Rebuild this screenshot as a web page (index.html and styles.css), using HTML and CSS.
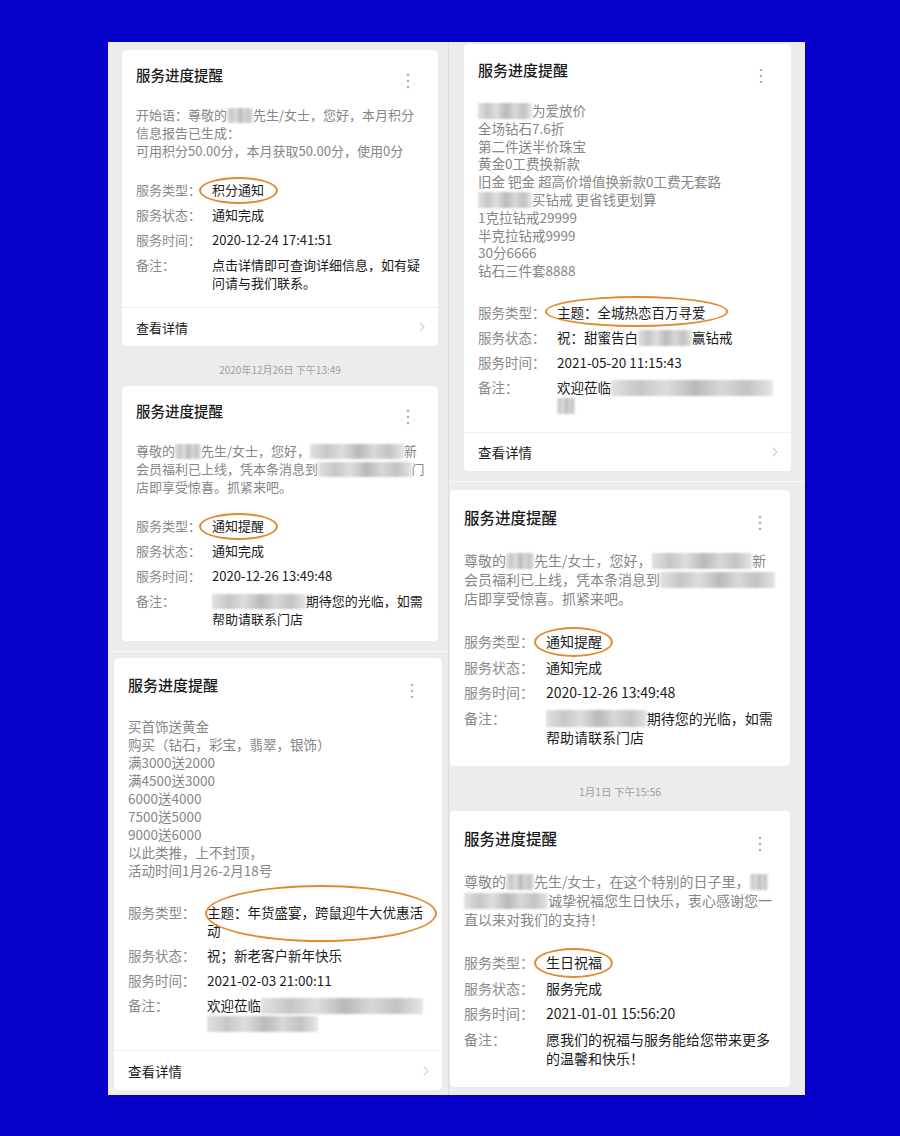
FILE: index.html
```html
<!DOCTYPE html>
<html lang="zh-CN">
<head>
    <meta charset="UTF-8">
    <meta name="viewport" content="width=device-width, initial-scale=1.0">
    <title>服务进度提醒</title>
    <link rel="stylesheet" href="styles.css">
</head>
<body>
    <div class="board">
        <div class="col col-left">
            <section class="shot shot-a">
                <div class="card">
                    <div class="card-head">
                        <h3>服务进度提醒</h3>
                        <svg class="dots" viewBox="0 0 4 16" width="4" height="16"><circle cx="2" cy="2" r="1.3"/><circle cx="2" cy="8" r="1.3"/><circle cx="2" cy="14" r="1.3"/></svg>
                    </div>
                    <p class="msg">开始语：尊敬的<span class="blur blur-2"></span>先生/女士，您好，本月积分<br>信息报告已生成：<br>可用积分50.00分，本月获取50.00分，使用0分</p>
                    <div class="fields">
                        <div class="row"><span class="label">服务类型：</span><div class="value"><span class="mark">积分通知</span></div></div>
                        <div class="row"><span class="label">服务状态：</span><div class="value">通知完成</div></div>
                        <div class="row"><span class="label">服务时间：</span><div class="value">2020-12-24 17:41:51</div></div>
                        <div class="row"><span class="label">备注：</span><div class="value">点击详情即可查询详细信息，如有疑<br>问请与我们联系。</div></div>
                    </div>
                    <div class="card-foot">
                        <span>查看详情</span>
                        <svg class="chev" viewBox="0 0 6 10" width="6" height="10"><polyline points="1,1 5,5 1,9"/></svg>
                    </div>
                </div>

                <div class="stamp">2020年12月26日 下午13:49</div>

                <div class="card card-plain">
                    <div class="card-head">
                        <h3>服务进度提醒</h3>
                        <svg class="dots" viewBox="0 0 4 16" width="4" height="16"><circle cx="2" cy="2" r="1.3"/><circle cx="2" cy="8" r="1.3"/><circle cx="2" cy="14" r="1.3"/></svg>
                    </div>
                    <p class="msg">尊敬的<span class="blur blur-2"></span>先生/女士，您好，<span class="blur blur-7"></span>新<br>会员福利已上线，凭本条消息到<span class="blur blur-7"></span>门<br>店即享受惊喜。抓紧来吧。</p>
                    <div class="fields">
                        <div class="row"><span class="label">服务类型：</span><div class="value"><span class="mark">通知提醒</span></div></div>
                        <div class="row"><span class="label">服务状态：</span><div class="value">通知完成</div></div>
                        <div class="row"><span class="label">服务时间：</span><div class="value">2020-12-26 13:49:48</div></div>
                        <div class="row"><span class="label">备注：</span><div class="value"><span class="blur blur-7"></span>期待您的光临，如需<br>帮助请联系门店</div></div>
                    </div>
                </div>
            </section>

            <section class="shot shot-b">
                <div class="card">
                    <div class="card-head">
                        <h3>服务进度提醒</h3>
                        <svg class="dots" viewBox="0 0 4 16" width="4" height="16"><circle cx="2" cy="2" r="1.3"/><circle cx="2" cy="8" r="1.3"/><circle cx="2" cy="14" r="1.3"/></svg>
                    </div>
                    <p class="msg">买首饰送黄金<br>购买（钻石，彩宝，翡翠，银饰）<br>满3000送2000<br>满4500送3000<br>6000送4000<br>7500送5000<br>9000送6000<br>以此类推，上不封顶，<br>活动时间1月26-2月18号</p>
                    <div class="fields">
                        <div class="row"><span class="label">服务类型：</span><div class="value mark mark-tall">主题：年货盛宴，跨鼠迎牛大优惠活<br>动</div></div>
                        <div class="row"><span class="label">服务状态：</span><div class="value">祝；新老客户新年快乐</div></div>
                        <div class="row"><span class="label">服务时间：</span><div class="value">2021-02-03 21:00:11</div></div>
                        <div class="row"><span class="label">备注：</span><div class="value">欢迎莅临<span class="blur blur-12"></span><br><span class="blur blur-8"></span></div></div>
                    </div>
                    <div class="card-foot">
                        <span>查看详情</span>
                        <svg class="chev" viewBox="0 0 6 10" width="6" height="10"><polyline points="1,1 5,5 1,9"/></svg>
                    </div>
                </div>
            </section>
        </div>

        <div class="col col-right">
            <section class="shot shot-c">
                <div class="card">
                    <div class="card-head">
                        <h3>服务进度提醒</h3>
                        <svg class="dots" viewBox="0 0 4 16" width="4" height="16"><circle cx="2" cy="2" r="1.3"/><circle cx="2" cy="8" r="1.3"/><circle cx="2" cy="14" r="1.3"/></svg>
                    </div>
                    <p class="msg"><span class="blur blur-4"></span>为爱放价<br>全场钻石7.6折<br>第二件送半价珠宝<br>黄金0工费换新款<br>旧金 钯金 超高价增值换新款0工费无套路<br><span class="blur blur-4"></span>买钻戒 更省钱更划算<br>1克拉钻戒29999<br>半克拉钻戒9999<br>30分6666<br>钻石三件套8888</p>
                    <div class="fields">
                        <div class="row"><span class="label">服务类型：</span><div class="value"><span class="mark mark-wide">主题：全城热恋百万寻爱</span></div></div>
                        <div class="row"><span class="label">服务状态：</span><div class="value">祝：甜蜜告白<span class="blur blur-4"></span>赢钻戒</div></div>
                        <div class="row"><span class="label">服务时间：</span><div class="value">2021-05-20 11:15:43</div></div>
                        <div class="row"><span class="label">备注：</span><div class="value">欢迎莅临<span class="blur blur-12"></span><br><span class="blur blur-1"></span></div></div>
                    </div>
                    <div class="card-foot">
                        <span>查看详情</span>
                        <svg class="chev" viewBox="0 0 6 10" width="6" height="10"><polyline points="1,1 5,5 1,9"/></svg>
                    </div>
                </div>
            </section>

            <section class="shot shot-d">
                <div class="card card-plain">
                    <div class="card-head">
                        <h3>服务进度提醒</h3>
                        <svg class="dots" viewBox="0 0 4 16" width="4" height="16"><circle cx="2" cy="2" r="1.3"/><circle cx="2" cy="8" r="1.3"/><circle cx="2" cy="14" r="1.3"/></svg>
                    </div>
                    <p class="msg">尊敬的<span class="blur blur-2"></span>先生/女士，您好，<span class="blur blur-7"></span>新<br>会员福利已上线，凭本条消息到<span class="blur blur-8"></span><br>店即享受惊喜。抓紧来吧。</p>
                    <div class="fields">
                        <div class="row"><span class="label">服务类型：</span><div class="value"><span class="mark">通知提醒</span></div></div>
                        <div class="row"><span class="label">服务状态：</span><div class="value">通知完成</div></div>
                        <div class="row"><span class="label">服务时间：</span><div class="value">2020-12-26 13:49:48</div></div>
                        <div class="row"><span class="label">备注：</span><div class="value"><span class="blur blur-7"></span>期待您的光临，如需<br>帮助请联系门店</div></div>
                    </div>
                </div>

                <div class="stamp">1月1日 下午15:56</div>

                <div class="card card-plain">
                    <div class="card-head">
                        <h3>服务进度提醒</h3>
                        <svg class="dots" viewBox="0 0 4 16" width="4" height="16"><circle cx="2" cy="2" r="1.3"/><circle cx="2" cy="8" r="1.3"/><circle cx="2" cy="14" r="1.3"/></svg>
                    </div>
                    <p class="msg">尊敬的<span class="blur blur-2"></span>先生/女士，在这个特别的日子里，<span class="blur blur-1"></span><br><span class="blur blur-6"></span>诚挚祝福您生日快乐，衷心感谢您一<br>直以来对我们的支持！</p>
                    <div class="fields">
                        <div class="row"><span class="label">服务类型：</span><div class="value"><span class="mark">生日祝福</span></div></div>
                        <div class="row"><span class="label">服务状态：</span><div class="value">服务完成</div></div>
                        <div class="row"><span class="label">服务时间：</span><div class="value">2021-01-01 15:56:20</div></div>
                        <div class="row"><span class="label">备注：</span><div class="value">愿我们的祝福与服务能给您带来更多<br>的温馨和快乐！</div></div>
                    </div>
                </div>
            </section>
        </div>
    </div>
</body>
</html>
```

FILE: styles.css
```css
body {
    margin: 0;
    background: #0500c8;
    font-family: "Noto Sans CJK SC", "Noto Sans", sans-serif;
}
.board {
    display: flex;
    width: 697px;
    height: 1053px;
    margin: 42px 0 0 108px;
    background: #ececec;
}
.col-left {
    width: 340px;
    border-right: 1px solid #dcdce6;
}
.col-right { width: 356px; }
.shot {
    overflow: hidden;
    box-sizing: border-box;
}

/* each shot is a screenshot at its own scale */
.shot-a {
    height: 609px;
    padding: 8px 10px 0 14px;
    font-size: 13px;
    --title: 14.5px; --title-lh: 20px; --pad-top: 15px; --pad-bottom: 13px;
    --lh: 18px; --row: 7px; --body-gap: 21px; --field-gap: 21px;
    --foot-gap: 15px; --foot-h: 38px;
}
.shot-b {
    height: 444px;
    padding: 6px 6px 0 6px;
    border-top: 1px solid #f7f7f7;
    font-size: 13.5px;
    --title: 15px; --title-lh: 20px; --pad-top: 17px; --pad-bottom: 18px;
    --lh: 18px; --row: 7px; --body-gap: 22px; --field-gap: 24px;
    --foot-gap: 18px; --foot-h: 39px;
}
.shot-c {
    height: 439px;
    padding: 2px 14px 0 15px;
    font-size: 13.5px;
    --title: 15px; --title-lh: 20px; --pad-top: 16px; --pad-bottom: 18px;
    --lh: 17.8px; --row: 7.2px; --body-gap: 22px; --field-gap: 24px;
    --foot-gap: 17px; --foot-h: 38px;
}
.shot-d {
    height: 614px;
    padding: 8px 15px 0 1px;
    border-top: 1px solid #f7f7f7;
    font-size: 14px;
    --title: 15.5px; --title-lh: 21px; --pad-top: 16.5px; --pad-bottom: 19.5px;
    --lh: 19px; --row: 6.5px; --body-gap: 23.5px; --field-gap: 24px;
    --foot-gap: 17px; --foot-h: 39px;
}

.card {
    background: #fff;
    border-radius: 4px;
    padding: var(--pad-top) 14px 0;
}
.card-plain { padding-bottom: var(--pad-bottom); }
.card-head {
    display: flex;
    justify-content: space-between;
    align-items: flex-start;
}
.card-head h3 {
    margin: 0;
    font-size: var(--title);
    line-height: var(--title-lh);
    font-weight: 500;
    color: #1a1a1a;
}
.dots {
    margin: 8px 14px -4px 0;
    fill: #b4b4b4;
}
.msg {
    margin: var(--body-gap) 0 0;
    line-height: var(--lh);
    color: #868686;
    white-space: nowrap;
}
.fields { margin-top: var(--field-gap); }
.row {
    display: flex;
    line-height: var(--lh);
    margin-top: var(--row);
}
.row:first-child { margin-top: 0; }
.label {
    flex: none;
    width: 5.85em;
    color: #8a8a8a;
}
.value {
    flex: 1;
    color: #1c1c1c;
    white-space: nowrap;
}
.card-foot {
    display: flex;
    justify-content: space-between;
    align-items: center;
    height: var(--foot-h);
    margin: var(--foot-gap) -14px 0;
    padding: 0 13px 0 14px;
    border-top: 1px solid #efefef;
    color: #1c1c1c;
}
.chev {
    fill: none;
    stroke: #d0d0d0;
    stroke-width: 1.2;
}
.stamp {
    text-align: center;
    font-size: 10px;
    line-height: 14px;
    color: #a0a0a0;
    padding: 17px 0 9px;
}
.shot-d .stamp {
    font-size: 10.5px;
    padding: 19px 0 12px;
}

/* mosaic over hidden names */
.blur {
    display: inline-block;
    height: 1.15em;
    vertical-align: -0.22em;
    background: linear-gradient(90deg, #e2e2e2, #c6c6c6 18%, #dedede 34%, #b9b9b9 52%, #d8d8d8 68%, #c3c3c3 84%, #e6e6e6);
    filter: blur(0.8px);
}
.blur-1 { width: 1.3em; }
.blur-2 { width: 2em; }
.blur-4 { width: 4em; }
.blur-6 { width: 6em; }
.blur-7 { width: 7.2em; }
.blur-8 { width: 8.2em; }
.blur-12 { width: 12em; }

/* orange hand-drawn circles */
.mark {
    position: relative;
    display: inline-block;
}
.mark::after {
    content: "";
    position: absolute;
    inset: -4px -14px -5px -13px;
    border: 2px solid #e3892e;
    border-radius: 50%;
}
.shot-d .mark::after { inset: -5px -11px -6px -12px; }
.mark-wide::after { inset: -8px -23px -5px -12px; }
.mark-tall { display: block; }
.mark-tall::after { inset: -18px -9px -3px -2px; }
```
